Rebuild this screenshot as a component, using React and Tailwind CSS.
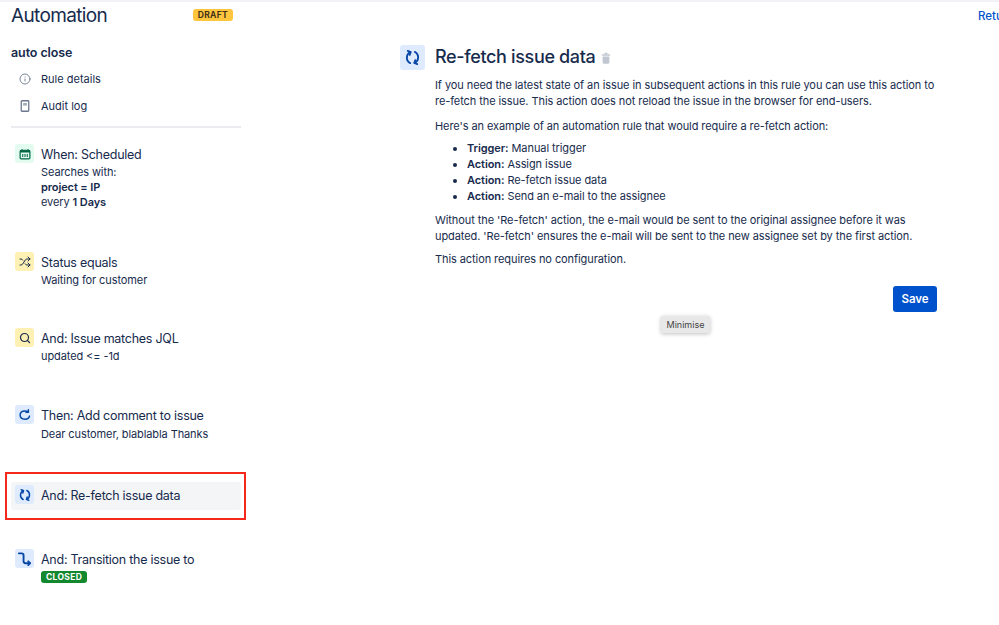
import { Info, Search, Shuffle } from 'lucide-react';

const ink = 'text-[#172b4d]';

// two facing arcs with arrow heads, the jira "re-fetch" glyph
const RefetchIcon = ({ size = 12 }) => (
  <svg width={size} height={size} viewBox="0 0 16 16" fill="none" stroke="#0747a6" strokeWidth="2" strokeLinecap="round" strokeLinejoin="round">
    <path d="M5.5 14 A6.6 6.6 0 0 1 5.8 2.2" />
    <path d="M3 1 l3 1.2 l-1 3" />
    <path d="M10.5 2 A6.6 6.6 0 0 1 10.2 13.8" />
    <path d="M13 15 l-3 -1.2 l1 -3" />
  </svg>
);

const CommentIcon = () => (
  <svg width="12" height="12" viewBox="0 0 16 16" fill="none" stroke="#0747a6" strokeWidth="2" strokeLinecap="round" strokeLinejoin="round">
    <path d="M14 9.5 C13.5 12.2 11 13.5 8 13.5 C4 13.5 1.5 11.2 1.5 8 C1.5 4.8 4 2.5 8 2.5 C9.5 2.5 10.8 2.9 11.8 3.6" />
    <path d="M12.5 1 v3.4 h-3.2" />
  </svg>
);

const TransitionIcon = () => (
  <svg width="15" height="15" viewBox="0 0 16 16" fill="none" stroke="#0747a6" strokeWidth="2" strokeLinecap="round" strokeLinejoin="round">
    <path d="M2 2.5 h3 a2 2 0 0 1 2 2 v6.5 a2 2 0 0 0 2 2 h4.5" />
    <path d="M12 11 l2 2 l-2 2" />
  </svg>
);

const CalendarIcon = () => (
  <svg width="12" height="12" viewBox="0 0 16 16" fill="none">
    <rect x="1.5" y="3" width="13" height="11.5" rx="1.5" stroke="#006644" strokeWidth="1.6" />
    <rect x="1.5" y="3" width="13" height="3" fill="#006644" />
    <path d="M4 1.5 v3 M12 1.5 v3 M5 8 v4 M8 8 v4 M11 8 v4" stroke="#006644" strokeWidth="1.4" />
  </svg>
);

const LogIcon = () => (
  <svg width="12" height="12" viewBox="0 0 16 16" fill="none">
    <rect x="3" y="1" width="10" height="14" rx="1" stroke="#6b778c" strokeWidth="1.7" />
    <rect x="5.5" y="4" width="5" height="3.5" fill="#a5adba" />
  </svg>
);

const TrashIcon = () => (
  <svg width="12" height="12" viewBox="0 0 16 16" fill="#c1c7d0">
    <rect x="6" y="1" width="4" height="2" rx="0.5" />
    <rect x="2.5" y="3" width="11" height="2" rx="0.5" />
    <path d="M3.5 6 h9 v8 a1.5 1.5 0 0 1 -1.5 1.5 H5 A1.5 1.5 0 0 1 3.5 14 z" />
  </svg>
);

const Tile = ({ bg, children }) => (
  <div className={`w-[19px] h-[19px] rounded-[3px] flex items-center justify-center shrink-0 ${bg}`}>{children}</div>
);

const Step = ({ bg, icon, title, children, className }) => (
  <div className={`flex gap-[7px] pl-[4px] ${className}`}>
    <Tile bg={bg}>{icon}</Tile>
    <div className="min-w-0">
      <div className={`text-[12.5px] leading-[22px] tracking-[-0.26px] ${ink}`}>{title}</div>
      {children}
    </div>
  </div>
);

const Sub = ({ children, className = '' }) => (
  <div className={`text-[11px] leading-[15px] tracking-[-0.1px] -mt-[1px] ${ink} ${className}`}>{children}</div>
);

export default function App() {
  return (
    <div className="relative w-[999px] h-[625px] overflow-hidden bg-white font-['Inter',sans-serif] border-t-2 border-[#f1f2f6] flex">
      <aside className="w-[230px] ml-[11px] shrink-0">
        <div className="flex items-center justify-between pr-[8px] h-[27px]">
          <h1 className={`text-[19px] leading-[27px] font-normal tracking-[-0.65px] ${ink}`}>Automation</h1>
          <span className="bg-[#ffc53d] text-[#42321a] text-[8.5px] leading-[12px] font-bold tracking-[0.3px] px-[5px] rounded-[3px] -mt-[2px]">DRAFT</span>
        </div>
        <div className={`mt-[14px] text-[12.5px] leading-[20px] font-semibold tracking-[-0.1px] ${ink}`}>auto close</div>
        <div className={`mt-[6px] flex items-center gap-[10px] pl-[8px] h-[20px] text-[11px] ${ink}`}>
          <Info size={12} color="#6b778c" strokeWidth={1.8} />
          Rule details
        </div>
        <div className={`mt-[7px] flex items-center gap-[10px] pl-[8px] h-[20px] text-[11px] ${ink}`}>
          <LogIcon />
          Audit log
        </div>
        <div className="mt-[10px] h-[2px] bg-[#ebecf0]" />

        <Step className="mt-[16px] h-[108px]" bg="bg-[#e3fcef]" icon={<CalendarIcon />} title="When: Scheduled">
          <Sub>Searches with:</Sub>
          <Sub className="mt-0 font-semibold">project = IP</Sub>
          <Sub className="mt-0">every <b className="font-semibold">1 Days</b></Sub>
        </Step>
        <Step className="h-[76px]" bg="bg-[#fff0b3]" icon={<Shuffle size={12} color="#172b4d" strokeWidth={2} />} title="Status equals">
          <Sub>Waiting for customer</Sub>
        </Step>
        <Step className="h-[77px]" bg="bg-[#fff0b3]" icon={<Search size={12} color="#172b4d" strokeWidth={2.4} />} title="And: Issue matches JQL">
          <Sub>updated &lt;= -1d</Sub>
        </Step>
        <Step className="h-[77px]" bg="bg-[#deebff]" icon={<CommentIcon />} title="Then: Add comment to issue">
          <Sub className="pt-[1px]">Dear customer, blablabla Thanks</Sub>
        </Step>
        <div className="h-[28px] pt-[3px] bg-[#f4f5f7] rounded-[3px]">
          <Step bg="bg-[#deebff]" icon={<RefetchIcon />} title="And: Re-fetch issue data" />
        </div>
        <Step className="mt-[39px]" bg="bg-[#deebff]" icon={<TransitionIcon />} title="And: Transition the issue to">
          <span className="block w-fit bg-[#13882f] text-white text-[8.5px] leading-[12px] font-bold tracking-[0.3px] px-[5px] rounded-[3px]">CLOSED</span>
        </Step>
      </aside>

      <main className="ml-[159px] w-[537px] shrink-0 pt-[42px]">
        <div className="flex items-center gap-[10px]">
          <div className="w-[25px] h-[25px] rounded-[3px] bg-[#deebff] flex items-center justify-center">
            <RefetchIcon size={15} />
          </div>
          <h2 className={`text-[18px] leading-[26px] font-medium tracking-[-0.35px] ${ink}`}>Re-fetch issue data</h2>
          <div className="-ml-[5px] mt-[2px]"><TrashIcon /></div>
        </div>
        <div className={`ml-[35px] mt-[7px] text-[11px] leading-[16px] tracking-[-0.08px] ${ink}`}>
          <p>If you need the latest state of an issue in subsequent actions in this rule you can use this action to re-fetch the issue. This action does not reload the issue in the browser for end-users.</p>
          <p className="mt-[9px]">Here's an example of an automation rule that would require a re-fetch action:</p>
          <ul className="mt-[6px] ml-[32px] list-disc">
            <li><b className="font-semibold">Trigger:</b> Manual trigger</li>
            <li><b className="font-semibold">Action:</b> Assign issue</li>
            <li><b className="font-semibold">Action:</b> Re-fetch issue data</li>
            <li><b className="font-semibold">Action:</b> Send an e-mail to the assignee</li>
          </ul>
          <p className="mt-[8px]">Without the 'Re-fetch' action, the e-mail would be sent to the original assignee before it was updated. 'Re-fetch' ensures the e-mail will be sent to the new assignee set by the first action.</p>
          <p className="mt-[7px]">This action requires no configuration.</p>
          <div className="mt-[19px] flex justify-end">
            <button className="h-[26px] w-[44px] bg-[#0052cc] text-white text-[11.5px] font-semibold rounded-[3px]">Save</button>
          </div>
        </div>
      </main>

      <div className="ml-[41px] pt-[6px] shrink-0 text-[11.5px] font-medium text-[#0052cc] whitespace-nowrap">Return</div>

      {/* annotation and tooltip sit on top of the page */}
      <div className="absolute left-[5px] top-[470px] w-[241px] h-[48px] border-2 border-[#f5281c]" />
      <div className="absolute left-[661px] top-[314px] h-[17px] w-[49px] flex items-center justify-center bg-[#e8e8e8] rounded-[2px] shadow-[0_1px_4px_rgba(0,0,0,0.25)] text-[9px] text-[#444]">Minimise</div>
    </div>
  );
}
